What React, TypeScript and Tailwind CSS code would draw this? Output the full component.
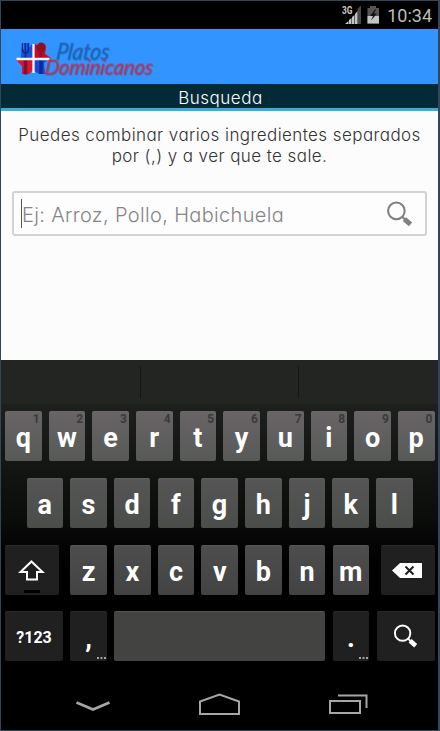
import clsx from "clsx";

const TOP_ROW = ["q", "w", "e", "r", "t", "y", "u", "i", "o", "p"];
const HOME_ROW = ["a", "s", "d", "f", "g", "h", "j", "k", "l"];
const BOTTOM_ROW = ["z", "x", "c", "v", "b", "n", "m"];

function Logo() {
  return (
    <svg width="142" height="44" viewBox="14 34 142 44" className="overflow-visible" role="img" aria-label="Platos Dominicanos">
      <defs>
        <clipPath id="star">
          <path d="M22 42h1v6h1v-6h1.500v6h1v-6h1.500v6l4-5h4l2 3q1-4 4-4 4 0 4 5l-1 6 6 4-7 5 1 11h-6l-6-4-4 4h-2l-1-2v2h-4V65l-6-6 5-3z" />
        </clipPath>
      </defs>
      <g clipPath="url(#star)">
        <path d="M14 40h19v18H14z" fill="#1750dd" />
        <path d="M33 40h19v18H33z" fill="#c40b20" />
        <path d="M14 58h19v18H14z" fill="#d9162a" />
        <path d="M33 58h19v18H33z" fill="#1649d4" />
      </g>
      <path d="M22.500 42v7q0 3 3 3t3-3v-7M25.500 42v15" fill="none" stroke="#142a83" strokeWidth="1.400" />
      <path d="M25.500 59v14.500" stroke="#7a1334" strokeWidth="3.500" />
      <ellipse cx="41" cy="46.500" rx="4.300" ry="5" fill="#8f1023" />
      <path d="M41 50v6" stroke="#8f1023" strokeWidth="3" />
      <path d="M41 59v14" stroke="#10298f" strokeWidth="3.500" />
      <path d="M16.500 58h33M33.500 43v29" stroke="#f5f7ff" strokeWidth="2.300" />
      <g fontFamily="Lato, sans-serif" fontStyle="italic">
        <text x="62.500" y="59" fontSize="22" textLength="53" lengthAdjust="spacingAndGlyphs" transform="skewX(-7)" fill="#1c63b7" className="drop-shadow-[1px_1px_0_#173c7266]">Platos</text>
        <text x="53" y="73" fontSize="21" textLength="108" lengthAdjust="spacingAndGlyphs" transform="skewX(-7)" fill="#c52e43" className="drop-shadow-[1px_1px_0_#4f294766]">Dominicanos</text>
      </g>
    </svg>
  );
}

function StatusBar() {
  return (
    <div className="flex h-7 items-center justify-end bg-black pr-[6px] font-[Roboto,sans-serif] text-[#bcbcbc]">
      <svg width="22" height="20" viewBox="0 0 22 20" className="mr-[3px]">
        <text x="0" y="9" fontFamily="Roboto, sans-serif" fontSize="10" fontWeight="700" textLength="10.500" lengthAdjust="spacingAndGlyphs" fill="#c8c8c8">3G</text>
        <path d="M15.500 19V4L19 .5V19z" fill="#4a4a4a" />
        <path d="M3 19l3.500-3v3zM7 19v-4l2.500-2v6zM10 19v-7l2.500-2v9zM13 19V9l2.500-3v13z" fill="#c4c4c4" />
      </svg>
      <svg width="13" height="18" viewBox="0 0 13 18" className="mr-[7px]">
        <path d="M3 0h6v2h3v15.500H.5V2H3z" fill="#555" />
        <path d="M.5 10H12v7.500H.5z" fill="#c4c4c4" />
        <path d="M8 3.500L3 10h3l-2 4.500 6-7H7l2-4z" fill="#111" />
      </svg>
      <span className="pt-[2px] text-[18px] leading-none">10:34</span>
    </div>
  );
}

function Magnifier({ size, className }: { size: number; className?: string }) {
  return (
    <svg width={size} height={size} viewBox="0 0 26 26" fill="none" stroke="currentColor" className={className}>
      <circle cx="10" cy="9.500" r="8" strokeWidth="2" />
      <path d="M15.500 15l3 3" strokeWidth="2" />
      <path d="M17.800 17.500l5.800 5" strokeWidth="4.800" />
    </svg>
  );
}

function LetterKey({ label, hint, tone }: { label: string; hint?: string; tone: string }) {
  return (
    <div className={clsx("relative flex h-[50px] w-[36.600px] shrink-0 items-center justify-center rounded-[2px] border-t border-white/10 bg-linear-to-b text-[27px] leading-none font-bold text-white", tone)}>
      <span className="pt-[4px]">{label}</span>
      {hint && <span className="absolute top-[1px] right-[2px] text-[12px] leading-[13px] font-bold text-[#3a3a3a]">{hint}</span>}
    </div>
  );
}

function DarkKey({ width, more, children }: { width: string; more?: boolean; children: React.ReactNode }) {
  return (
    <div className={clsx("relative flex h-[50px] shrink-0 items-center justify-center rounded-[2px] border-t border-white/5 bg-[#202020] text-white", width)}>
      {children}
      {more && (
        <svg width="9" height="2" className="absolute right-[1px] bottom-[2px]">
          <path d="M0 0h2v2H0zM3.500 0h2v2h-2zM7 0h2v2H7z" fill="#a2a2a2" />
        </svg>
      )}
    </div>
  );
}

function Keyboard() {
  return (
    <div className="flex h-[319px] flex-col bg-linear-to-b from-[#252725] via-[#0b0d0b] via-50% to-black to-75% pr-[3.500px] pl-1 font-[Roboto,sans-serif]">
      <div className="-mr-[3.500px] -ml-1 flex h-[44px] shrink-0 bg-[#232522] py-1.5">
        <div className="w-[140px] border-r border-[#151715]" />
        <div className="w-[158px] border-r border-[#151715]" />
      </div>
      <div className="mt-[7px] flex justify-between">
        {TOP_ROW.map((key, i) => (
          <LetterKey key={key} label={key} hint={String((i + 1) % 10)} tone="from-[#696467] to-[#575957]" />
        ))}
      </div>
      <div className="mt-[17px] flex gap-[7.100px] pl-[21.500px]">
        {HOME_ROW.map((key) => (
          <LetterKey key={key} label={key} tone="from-[#545554] to-[#4b4d4b]" />
        ))}
      </div>
      <div className="mt-[17px] flex justify-between">
        <DarkKey width="w-[53.500px]">
          <svg width="27" height="23" viewBox="0 0 27 23" fill="none" stroke="white" strokeWidth="2">
            <path d="M13.500 2.500L24.500 13h-5.500v7.500h-10V13H2.500z" />
          </svg>
          <span className="absolute bottom-[2px] left-[19px] h-[3px] w-4 bg-black" />
        </DarkKey>
        <div className="flex gap-[7.100px]">
          {BOTTOM_ROW.map((key) => (
            <LetterKey key={key} label={key} tone="from-[#4c4d4c] to-[#424342]" />
          ))}
        </div>
        <DarkKey width="w-[53.500px]">
          <svg width="31" height="16" viewBox="0 0 31 16">
            <path d="M8 0h22v15H8L0 7.500z" fill="white" />
            <path d="M13.500 3.500l8 8m0-8l-8 8" stroke="#202020" strokeWidth="2" />
          </svg>
        </DarkKey>
      </div>
      <div className="mt-[16px] flex justify-between">
        <DarkKey width="w-[58px]">
          <span className="pt-0.5 text-[16px] leading-none font-bold">?123</span>
        </DarkKey>
        <DarkKey width="w-[36.600px]" more>
          <span className="pt-1 text-[27px] leading-none font-bold">,</span>
        </DarkKey>
        <div className="h-[50px] w-[211px] rounded-[2px] border-t border-white/10 bg-[#434441]" />
        <DarkKey width="w-[36.600px]" more>
          <span className="pt-1 text-[27px] leading-none font-bold">.</span>
        </DarkKey>
        <DarkKey width="w-[58px]">
          <Magnifier size={25} />
        </DarkKey>
      </div>
    </div>
  );
}

function NavBar() {
  return (
    <div className="flex h-[51px] items-center justify-between bg-black pr-[70px] pl-[75px] text-[#a6a6a6]">
      <svg width="34" height="11" viewBox="0 0 34 11" fill="none" stroke="currentColor" strokeWidth="2.700" className="mt-1">
        <path d="M.5 1.500L17 8.500l16.500-7" />
      </svg>
      <svg width="43" height="23" viewBox="0 0 43 23" fill="none" stroke="currentColor" strokeWidth="2">
        <path d="M2 21V8.500L21.500 1.500 41 8.500V21z" />
      </svg>
      <svg width="39" height="20" viewBox="0 0 39 20" fill="none" stroke="currentColor" strokeWidth="2" className="-mt-0.5">
        <path d="M1 7h30v12H1zM9 1.500h28.500V14" />
      </svg>
    </div>
  );
}

export default function App() {
  return (
    <div className="flex h-[731px] w-[440px] flex-col border border-r-2 border-[#31465b] bg-black font-[Inter,sans-serif] [font-feature-settings:'cv11']">
      <StatusBar />
      <header className="flex h-[55px] shrink-0 items-center bg-[#3294ff] pl-[13px]">
        <Logo />
      </header>
      <div className="flex h-[27px] shrink-0 items-center justify-center border-b-[3px] border-[#35b1d7] bg-[#042a37] pt-[5px] pl-[2px] text-[17px] leading-none font-light tracking-[0.500px] text-white">
        Busqueda
      </div>
      <main className="h-[249px] shrink-0 bg-[#fcfcfc] px-[11px] pt-[14px]">
        <p className="text-center text-[17px] leading-[21px] font-light tracking-[0.420px] whitespace-nowrap text-[#333]">
          Puedes combinar varios ingredientes separados
          <br />
          por (,) y a ver que te sale.
        </p>
        <div className="mt-[24px] flex h-[45px] items-center rounded-[3px] border-2 border-[#d0d3d4] bg-[#fdfdfd] pr-[12px] pl-[7px]">
          <span className="h-[29px] w-px bg-[#555]" />
          <span className="flex-1 pt-0.5 text-[20px] leading-none font-light tracking-[0.340px] whitespace-nowrap text-[#858585]">Ej: Arroz, Pollo, Habichuela</span>
          <Magnifier size={27} className="mt-0.5 text-[#808080]" />
        </div>
      </main>
      <Keyboard />
      <NavBar />
    </div>
  );
}
